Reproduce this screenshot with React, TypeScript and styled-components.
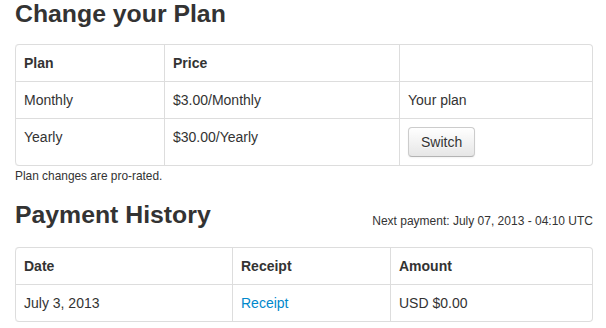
import React from "react";
import styled, { createGlobalStyle } from "styled-components";

const GlobalStyle = createGlobalStyle`
  html, body {
    margin: 0;
    padding: 0;
    background: #ffffff;
  }
  body {
    font-family: "Liberation Sans", Arial, Helvetica, sans-serif;
    font-size: 14px;
    line-height: 20px;
    color: #333333;
  }
`;

const Page = styled.div`
  width: 578px;
  padding: 0 13px 0 15px;
`;

const Heading = styled.h3`
  margin: 0 0 16px;
  font-size: 24.8px;
  line-height: 28px;
  font-weight: bold;
  color: #333333;
  text-rendering: optimizeLegibility;
`;

const HistoryHeader = styled.div`
  display: flex;
  justify-content: space-between;
  align-items: flex-end;
  margin: 15px 0 18px;
`;

const HistoryHeading = styled(Heading)`
  margin: 0;
`;

const NextPayment = styled.span`
  font-size: 12px;
  line-height: 16px;
  color: #333333;
`;

const Table = styled.table`
  width: 100%;
  table-layout: fixed;
  border-collapse: separate;
  border-spacing: 0;
  border: 1px solid #dddddd;
  border-left: 0;
  border-radius: 4px;
  margin: 0;
`;

const Cell = styled.td<{ $w?: number }>`
  padding: 8px;
  line-height: 20px;
  text-align: left;
  vertical-align: top;
  border-left: 1px solid #dddddd;
  border-top: 1px solid #dddddd;
  ${(p) => (p.$w ? `width: ${p.$w}px;` : "")}
  tr:first-child > & {
    border-top: 0;
  }
  tr:first-child > &:first-child {
    border-top-left-radius: 4px;
  }
  tr:last-child > &:first-child {
    border-bottom-left-radius: 4px;
  }
`;

const HeadCell = styled(Cell).attrs({ as: "th" })`
  font-weight: bold;
`;

const Note = styled.p`
  margin: 0;
  font-size: 11.9px;
  line-height: 20px;
`;

const Link = styled.a`
  color: #0088cc;
  text-decoration: none;
`;

const Button = styled.button`
  display: inline-block;
  padding: 4px 12px;
  margin: 0;
  font-family: "Liberation Sans", Arial, Helvetica, sans-serif;
  font-size: 14px;
  line-height: 20px;
  color: #333333;
  text-align: center;
  text-shadow: 0 1px 1px rgba(255, 255, 255, 0.75);
  background-color: #f5f5f5;
  background-image: linear-gradient(to bottom, #ffffff, #e6e6e6);
  border: 1px solid #cccccc;
  border-bottom-color: #b3b3b3;
  border-radius: 4px;
  box-shadow: inset 0 1px 0 rgba(255, 255, 255, 0.2),
    0 1px 2px rgba(0, 0, 0, 0.05);
  cursor: pointer;
`;

export default function App() {
  return (
    <>
      <GlobalStyle />
      <Page>
        <Heading>Change your Plan</Heading>
        <Table>
          <tbody>
            <tr>
              <HeadCell $w={132}>Plan</HeadCell>
              <HeadCell $w={218}>Price</HeadCell>
              <HeadCell></HeadCell>
            </tr>
            <tr>
              <Cell>Monthly</Cell>
              <Cell>$3.00/Monthly</Cell>
              <Cell>Your plan</Cell>
            </tr>
            <tr>
              <Cell>Yearly</Cell>
              <Cell>$30.00/Yearly</Cell>
              <Cell>
                <Button type="button">Switch</Button>
              </Cell>
            </tr>
          </tbody>
        </Table>
        <Note>Plan changes are pro-rated.</Note>

        <HistoryHeader>
          <HistoryHeading>Payment History</HistoryHeading>
          <NextPayment>Next payment: July 07, 2013 - 04:10 UTC</NextPayment>
        </HistoryHeader>
        <Table>
          <tbody>
            <tr>
              <HeadCell $w={200}>Date</HeadCell>
              <HeadCell $w={141}>Receipt</HeadCell>
              <HeadCell>Amount</HeadCell>
            </tr>
            <tr>
              <Cell>July 3, 2013</Cell>
              <Cell>
                <Link href="#">Receipt</Link>
              </Cell>
              <Cell>USD $0.00</Cell>
            </tr>
          </tbody>
        </Table>
      </Page>
    </>
  );
}
